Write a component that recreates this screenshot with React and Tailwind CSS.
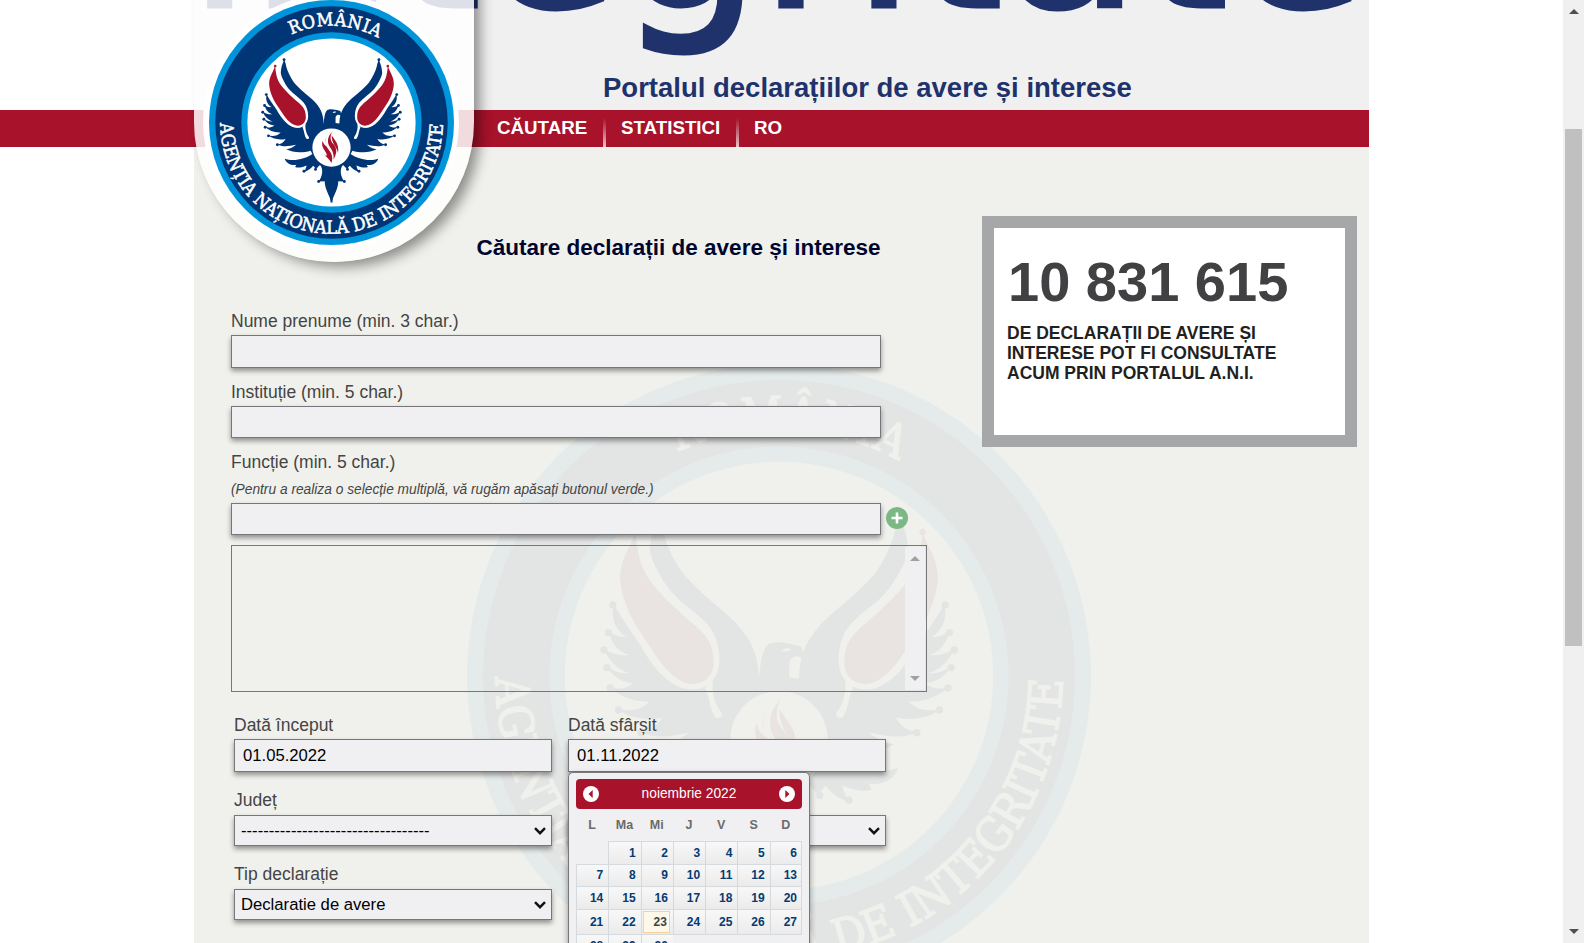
import React from "react";

const FULL = { rim: "#0095db", band: "#003675", paper: "#ffffff", bird: "#003675", red: "#a8122a", text: "#ffffff" };
const FAINT = { rim: "#e4ebea", band: "#e3e5e4", paper: "#f0f1ec", bird: "#e3e5e4", red: "#e9e4e1", text: "#f0f1ec" };

const HALF =
  "M-362 -479 C-372 -450 -384 -430 -387 -378 C-384 -345 -345 -275 -318 -248 C-290 -215 -260 -200 -238 -178 C-200 -145 -180 -110 -178 -48 C-180 -20 -205 30 -258 40 C-330 40 -380 -30 -420 -100 C-455 -150 -475 -180 -496 -216 C-504 -170 -492 -140 -458 -118 C-475 -115 -490 -120 -510 -134 C-505 -100 -480 -70 -450 -63 C-475 -60 -500 -65 -525 -82 C-510 -45 -480 -15 -446 -9 C-470 -5 -495 -12 -516 -29 C-500 0 -470 20 -436 22 C-460 38 -480 42 -506 33 C-480 62 -430 80 -388 76 C-410 100 -440 108 -481 100 C-455 125 -400 135 -350 125 C-365 150 -385 165 -415 168 C-370 190 -320 180 -270 170 C-300 195 -320 200 -345 205 C-290 235 -210 230 -160 215 L-146 240 C-200 278 -290 300 -357 276 C-345 315 -300 330 -268 322 L-278 340 C-250 350 -215 338 -190 328 C-195 350 -200 362 -210 375 C-185 372 -160 355 -140 330 C-128 340 -124 348 -122 360 C-108 345 -98 335 -88 325 C-60 350 -68 420 -100 450 L-52 448 C-50 510 -18 550 0 610 L8 610 L8 0 L-60 8 C-62 -60 -80 -110 -138 -168 C-180 -208 -240 -250 -288 -308 C-315 -345 -335 -390 -345 -425 C-350 -450 -355 -470 -362 -479 Z";
const RED =
  "M-430 -432 C-440 -395 -478 -350 -476 -290 C-470 -220 -440 -165 -400 -108 C-365 -55 -320 22 -258 24 C-220 24 -196 -5 -196 -38 C-196 -90 -210 -112 -248 -148 C-290 -185 -350 -235 -388 -288 C-420 -335 -425 -380 -430 -432 Z";
const KNOBS = [[-362, -479], [-430, -430], [-498, -213], [-511, -130], [-525, -78], [-516, -25], [-506, 36], [-481, 102], [-413, 170], [-210, 372], [-122, 358], [-98, 450]];

function Wing({ c }) {
  return (
    <g>
      <path d={HALF} fill={c.bird} />
      {KNOBS.map(([x, y], i) => (
        <circle key={i} cx={x} cy={y} r="11" fill={i === 1 ? c.red : c.bird} />
      ))}
      <path d={RED} fill={c.red} stroke={c.paper} strokeWidth="32" paintOrder="stroke" />
      <circle cx="-430" cy="-430" r="9" fill={c.red} />
      <path d="M-222 34 C-205 70 -208 105 -190 124 C-180 130 -168 122 -172 112 C-188 90 -204 55 -198 10 Z" fill={c.paper} />
    </g>
  );
}

function Emblem({ c, id, className }) {
  return (
    <svg viewBox="-935 -935 1870 1870" className={className}>
      <circle r="935" fill={c.rim} />
      <circle r="887" fill={c.band} />
      <circle r="688" fill={c.rim} />
      <circle r="642" fill={c.paper} />
      <Wing c={c} />
      <g transform="scale(-1 1)">
        <Wing c={c} />
      </g>
      <path d="M-61 12 C-56 -20 -54 -98 -20 -99 C0 -105 30 -98 67 -88 C72 -75 75 -68 72 -50 C62 -58 52 -62 42 -56 C30 -50 31 -43 31 -20 L31 60 L-61 60 Z" fill={c.bird} />
      <path d="M31 14 L66 14 L70 60 L20 60 Z" fill={c.bird} />
      <path d="M8 -74 C18 -86 28 -84 36 -80 C28 -74 18 -72 8 -74 Z" fill={c.paper} />
      <circle cy="191" r="146" fill={c.paper} />
      <g fill={c.red}>
        <path d="M2 62 C-60 120 -60 160 -20 210 C5 240 12 270 0 310 C-15 280 -40 265 -58 240 C-40 262 -30 255 -40 235 C-60 200 -80 180 -68 142 C-60 165 -50 175 -40 185 C-55 140 -45 105 2 62 Z" />
        <path d="M4 72 C-14 110 -10 140 15 165 C45 200 42 240 14 285 C22 245 8 215 -10 190 C-38 150 -30 105 4 72 Z" />
        <path d="M2 100 C25 140 60 160 50 235 C44 190 -2 160 2 100 Z" />
      </g>
      <defs>
        <path id={id + "-top"} d="M-738 0 A738 738 0 0 1 738 0" />
        <path id={id + "-low"} d="M-850 0 A850 850 0 0 0 850 0" />
      </defs>
      <g fill={c.text} stroke={c.text} strokeWidth="4" className="[font-family:'DejaVu_Serif_Condensed','DejaVu_Serif',serif]">
        <text fontSize="138" textLength="690" lengthAdjust="spacing">
          <textPath href={"#" + id + "-top"} startOffset="842" textLength="690">ROMÂNIA</textPath>
        </text>
        <text fontSize="140" textLength="2655" lengthAdjust="spacingAndGlyphs">
          <textPath href={"#" + id + "-low"} startOffset="4" textLength="2655" lengthAdjust="spacingAndGlyphs">AGENȚIA NAȚIONALĂ DE INTEGRITATE</textPath>
        </text>
      </g>
    </svg>
  );
}

const FIELD = "border border-[#77777b] bg-[#f0f0f3] shadow-[0_3px_5px_rgba(0,0,0,0.4)]";

function Label({ children, className }) {
  return <div className={"text-[17.5px] leading-[20px] text-[#444] whitespace-nowrap " + className}>{children}</div>;
}

function Select({ children }) {
  return (
    <div className={"flex h-[31px] items-center justify-between pr-[5px] pl-[6px] text-[16.67px] text-black " + FIELD}>
      <span className="whitespace-nowrap">{children}</span>
      <svg viewBox="0 0 12 8" className="h-[8px] w-[12px]">
        <path d="M1 1.2 L6 6.2 L11 1.2" fill="none" stroke="#111" strokeWidth="2.4" />
      </svg>
    </div>
  );
}

function Arrow({ flip }) {
  return (
    <svg viewBox="0 0 16 16" className="size-[16px]">
      <circle cx="8" cy="8" r="8" fill="#fff" />
      <path d={flip ? "M6.3 4 L10.5 8 L6.3 12 Z" : "M9.7 4 L5.5 8 L9.7 12 Z"} fill="#a8122a" />
    </svg>
  );
}

const WEEKS = [
  { h: "h-[23px]", days: [null, 1, 2, 3, 4, 5, 6] },
  { h: "h-[22px]", days: [7, 8, 9, 10, 11, 12, 13] },
  { h: "h-[23px]", days: [14, 15, 16, 17, 18, 19, 20] },
  { h: "h-[25px]", days: [21, 22, 23, 24, 25, 26, 27] },
  { h: "h-[23px]", days: [28, 29, 30, null, null, null, null] },
];

function Calendar() {
  return (
    <div className="absolute top-[33px] left-0 z-10 h-[200px] w-[242px] rounded-t-[5px] border border-[#77777b] bg-[#f0f0f3] px-[7px] pt-[6px] shadow-[0_3px_6px_rgba(0,0,0,0.4)]">
      <div className="flex h-[30px] items-center justify-between rounded-[4px] bg-[#a8122a] px-[7px]">
        <Arrow />
        <span className="pb-[2px] text-[13.75px] text-white">noiembrie 2022</span>
        <Arrow flip />
      </div>
      <div className="grid h-[32px] grid-cols-7 pt-[6px] text-center text-[12.5px] leading-[20px] font-bold text-[#6b6b6b]">
        {["L", "Ma", "Mi", "J", "V", "S", "D"].map((d) => (
          <span key={d}>{d}</span>
        ))}
      </div>
      <div className="w-[226px]">
        {WEEKS.map((w, i) => (
          <div key={i} className={"grid grid-cols-7 " + w.h}>
            {w.days.map((d, j) =>
              d === null ? (
                <span key={j} className={i === 4 ? "border-t border-[#d5dade]" : ""} />
              ) : (
                <span
                  key={j}
                  className="relative flex items-center justify-end border-t border-l border-[#d5dade] bg-gradient-to-b from-[#f8f8f8] to-[#ebebeb] pr-[5px] pb-px text-[12px] leading-none font-bold text-[#043b70] last:border-r last:pr-[4px]"
                >
                  {d === 23 && <span className="absolute inset-y-[1px] right-[3px] left-[1px] border border-[#fad09a] bg-[#fdf8ea]" />}
                  <span className={d === 23 ? "relative pr-px text-[#444]" : ""}>{d}</span>
                </span>
              )
            )}
          </div>
        ))}
      </div>
    </div>
  );
}

function Header() {
  return (
    <header className="relative h-[110px] overflow-hidden bg-[#f0f0f0] pt-[71px] pl-[409px] text-[27.5px] leading-[34px] font-bold whitespace-nowrap text-[#20326c]">
      <svg className="absolute top-0 left-0 h-[60px] w-[1175px]" viewBox="0 0 1175 60">
        <text x="-5.5" y="6" fontSize="224" fontWeight="400" fill="#20326c" stroke="#20326c" strokeWidth="5" className="[font-family:'DejaVu_Sans',sans-serif]">
          integritate
        </text>
      </svg>
      Portalul declarațiilor de avere și interese
    </header>
  );
}

function NavLine() {
  return <span className="h-[29px] w-[3px] self-end bg-gradient-to-b from-transparent to-[#e9c3c9]" />;
}

export default function App() {
  return (
    <div className="flex h-[943px] w-[1584px] overflow-hidden bg-white [font-family:'Liberation_Sans',Arial,sans-serif]">
      <div className="relative flex w-[1563px]">
        <div className="w-[194px] shrink-0 pt-[110px]">
          <div className="h-[37px] bg-[#a8122a]" />
        </div>
        <div className="relative h-[943px] w-[1175px] shrink-0 overflow-hidden bg-[#f0f1ec]">
          <Header />
          <nav className="flex h-[37px] bg-[#a8122a] pl-[303px] text-[18.75px] leading-[36px] font-bold whitespace-nowrap text-white">
            <span className="w-[106px]">CĂUTARE</span>
            <NavLine />
            <span className="w-[130px] pl-[15px]">STATISTICI</span>
            <NavLine />
            <span className="pl-[15px]">RO</span>
          </nav>
          <Emblem c={FAINT} id="mark" className="absolute top-[364px] left-[273px] size-[624px]" />
          <main className="relative flex justify-between pr-[12px] pl-[37px]">
            <form className="w-[696px]">
              <h1 className="h-[164px] pt-[88px] pl-[245.5px] text-[22.5px] leading-[26px] font-bold whitespace-nowrap text-[#00052e]">
                Căutare declarații de avere și interese
              </h1>
              <Label className="h-[24px]">Nume prenume (min. 3 char.)</Label>
              <div className={"h-[33px] w-[650px] " + FIELD} />
              <Label className="mt-[14px] h-[24px]">Instituție (min. 5 char.)</Label>
              <div className={"h-[32px] w-[650px] " + FIELD} />
              <Label className="mt-[14px] h-[27px]">Funcție (min. 5 char.)</Label>
              <div className="h-[24px] text-[13.75px] leading-[22px] whitespace-nowrap text-[#444] italic">
                (Pentru a realiza o selecție multiplă, vă rugăm apăsați butonul verde.)
              </div>
              <div className="flex items-center gap-[5px]">
                <div className={"h-[32px] w-[650px] " + FIELD} />
                <svg viewBox="0 0 22 22" className="-mt-[2px] size-[22px]">
                  <circle cx="11" cy="11" r="11" fill="#7bb886" />
                  <path d="M11 5.5 V16.5 M5.5 11 H16.5" stroke="#fff" strokeWidth="2.6" />
                </svg>
              </div>
              <div className="mt-[10px] flex h-[147px] justify-end border border-[#77777b] p-px">
                <div className="flex w-[20px] flex-col items-center justify-between bg-[#f0f0f2] py-[9px]">
                  <svg viewBox="0 0 10 5" className="h-[5px] w-[10px]"><path d="M0 5 L5 0 L10 5 Z" fill="#a0a0a0" /></svg>
                  <svg viewBox="0 0 10 5" className="h-[5px] w-[10px]"><path d="M0 0 L5 5 L10 0 Z" fill="#a0a0a0" /></svg>
                </div>
              </div>
              <div className="mt-[23px] flex gap-[16px] pl-[3px]">
                <div className="w-[318px]">
                  <Label className="h-[24px]">Dată început</Label>
                  <div className={"h-[33px] pl-[8px] text-[16.67px] leading-[31px] text-black " + FIELD}>01.05.2022</div>
                  <Label className="mt-[18px] h-[25px]">Județ</Label>
                  <Select>----------------------------------</Select>
                  <Label className="mt-[18px] h-[25px]">Tip declarație</Label>
                  <Select>Declaratie de avere</Select>
                </div>
                <div className="w-[318px]">
                  <Label className="h-[24px]">Dată sfârșit</Label>
                  <div className={"relative h-[33px] pl-[8px] text-[16.67px] leading-[31px] text-black " + FIELD}>
                    01.11.2022
                    <div className="absolute -top-px -left-px">
                      <Calendar />
                    </div>
                  </div>
                  <div className="mt-[43px]">
                    <Select />
                  </div>
                </div>
              </div>
            </form>
            <aside className="mt-[69px] h-[231px] w-[375px] border-[12px] border-[#a6a7a9] bg-white pt-[22px] pl-[13px] font-bold">
              <div className="h-[73px] pl-px text-[56px] leading-[64px] whitespace-nowrap text-[#414042]">10 831 615</div>
              <p className="w-[290px] text-[17.5px] leading-[20px] text-[#231f20]">
                DE DECLARAȚII DE AVERE ȘI INTERESE POT FI CONSULTATE ACUM PRIN PORTALUL A.N.I.
              </p>
            </aside>
          </main>
        </div>
        <div className="absolute -top-[80px] left-[194px] h-[342px] w-[280px] rounded-b-[140px] bg-white/85 shadow-[8px_7px_13px_-2px_rgba(0,0,0,0.42)]">
          <div className="absolute top-[74px] left-[9px] size-[256px] rounded-full bg-white p-[5.5px]">
            <Emblem c={FULL} id="seal" className="size-[245px]" />
          </div>
        </div>
      </div>
      <div className="flex w-[21px] flex-col items-center bg-[#f0f0f0]">
        <svg viewBox="0 0 10 5" className="mt-[9px] h-[5px] w-[10px]"><path d="M0 5 L5 0 L10 5 Z" fill="#505050" /></svg>
        <div className="mt-[115px] h-[517px] w-[17px] bg-[#c0c0c0]" />
        <svg viewBox="0 0 10 5" className="mt-auto mb-[9px] h-[5px] w-[10px]"><path d="M0 0 L5 5 L10 0 Z" fill="#505050" /></svg>
      </div>
    </div>
  );
}
